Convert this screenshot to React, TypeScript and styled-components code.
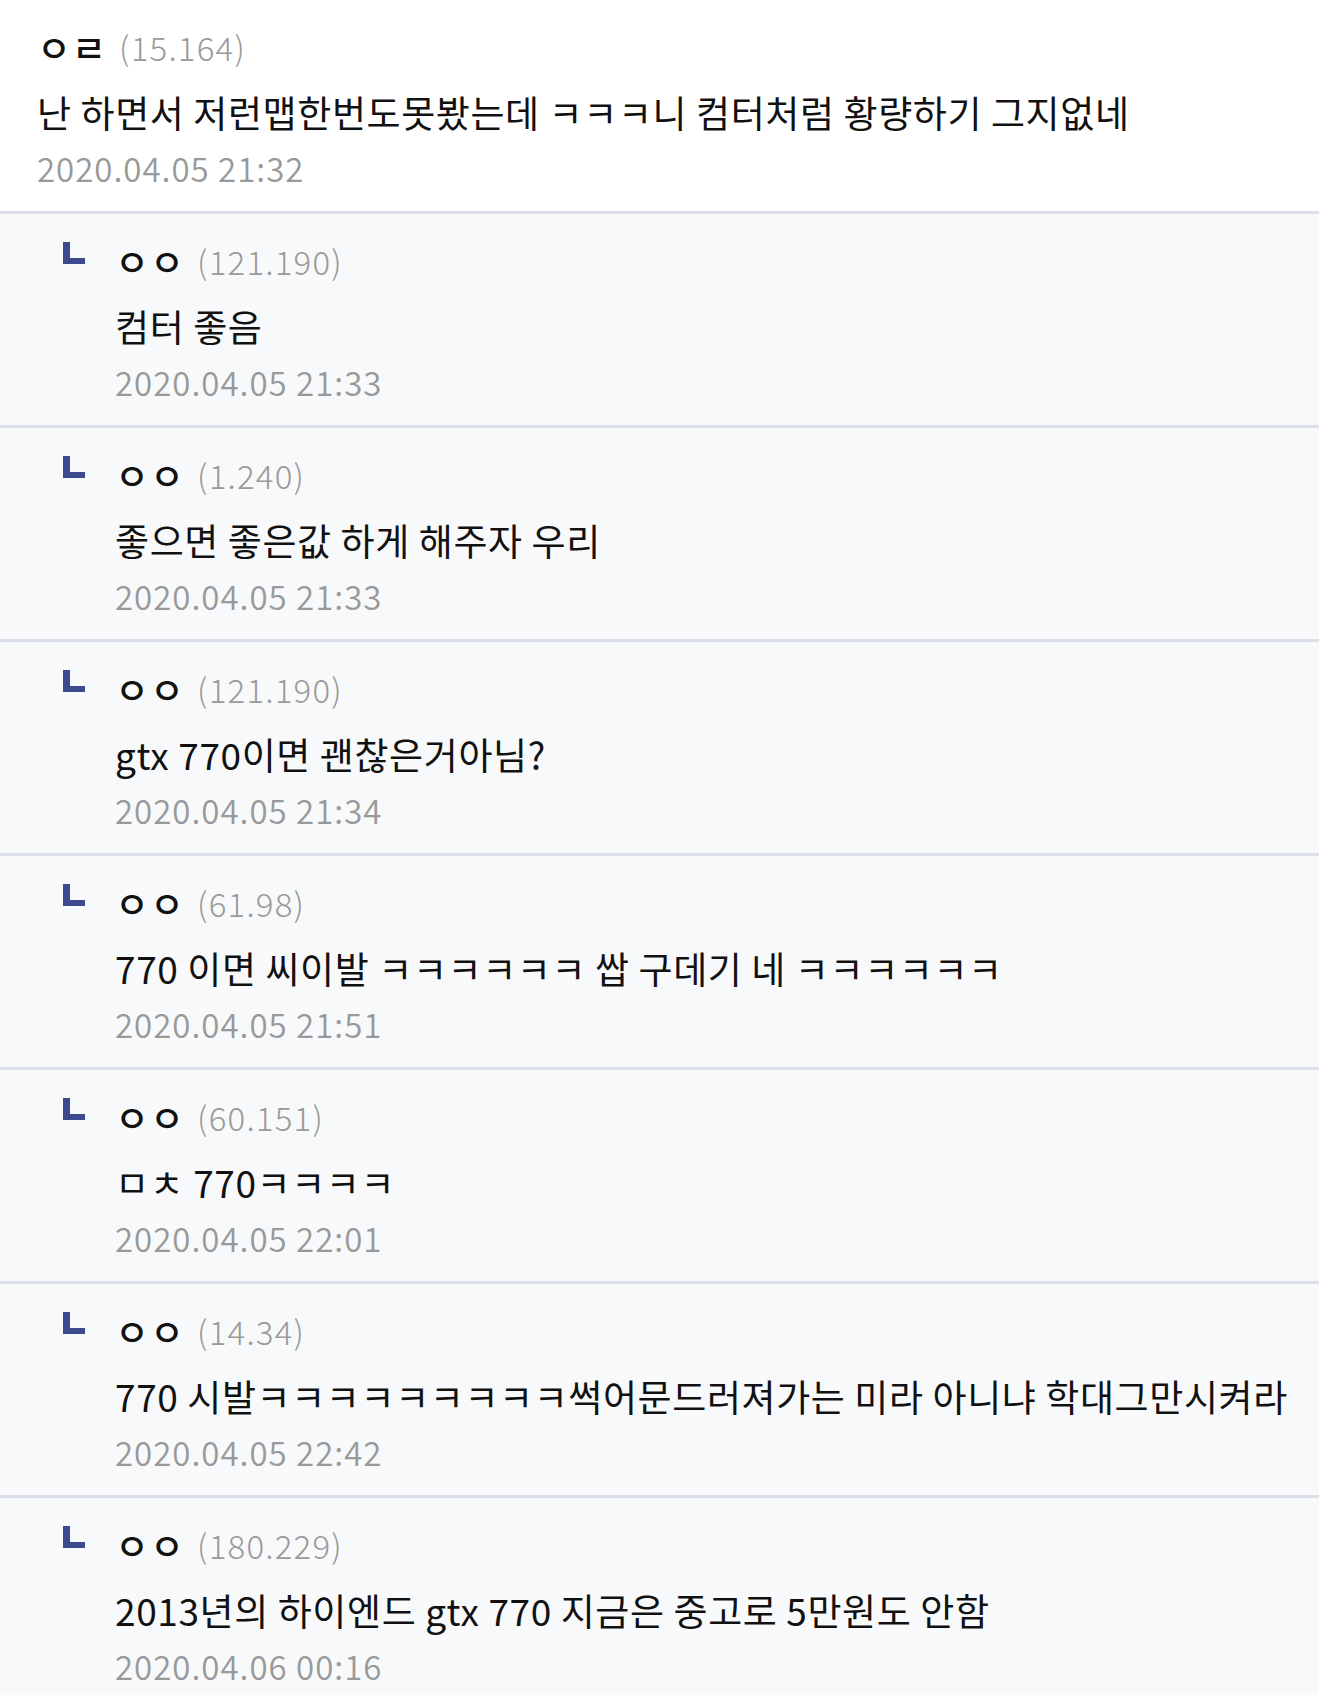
import React from 'react';
import styled, { createGlobalStyle } from 'styled-components';

const GlobalStyle = createGlobalStyle`
  html, body {
    margin: 0;
    padding: 0;
    background: #f8f9fb;
  }
  body {
    font-family: "Noto Sans CJK KR", "Noto Sans", sans-serif;
    color: #111;
  }
`;

interface Comment {
  nick: string;
  ip: string;
  text: string;
  date: string;
}

const main: Comment = {
  nick: 'ㅇㄹ',
  ip: '(15.164)',
  text: '난 하면서 저런맵한번도못봤는데 ㅋㅋㅋ니 컴터처럼 황량하기 그지없네',
  date: '2020.04.05 21:32',
};

const replies: Comment[] = [
  { nick: 'ㅇㅇ', ip: '(121.190)', text: '컴터 좋음', date: '2020.04.05 21:33' },
  { nick: 'ㅇㅇ', ip: '(1.240)', text: '좋으면 좋은값 하게 해주자 우리', date: '2020.04.05 21:33' },
  { nick: 'ㅇㅇ', ip: '(121.190)', text: 'gtx 770이면 괜찮은거아님?', date: '2020.04.05 21:34' },
  { nick: 'ㅇㅇ', ip: '(61.98)', text: '770 이면 씨이발 ㅋㅋㅋㅋㅋㅋ 쌉 구데기 네 ㅋㅋㅋㅋㅋㅋ', date: '2020.04.05 21:51' },
  { nick: 'ㅇㅇ', ip: '(60.151)', text: 'ㅁㅊ 770ㅋㅋㅋㅋ', date: '2020.04.05 22:01' },
  {
    nick: 'ㅇㅇ',
    ip: '(14.34)',
    text: '770 시발ㅋㅋㅋㅋㅋㅋㅋㅋㅋ썩어문드러져가는 미라 아니냐 학대그만시켜라',
    date: '2020.04.05 22:42',
  },
  { nick: 'ㅇㅇ', ip: '(180.229)', text: '2013년의 하이엔드 gtx 770 지금은 중고로 5만원도 안함', date: '2020.04.06 00:16' },
];

const List = styled.div`
  display: flex;
  flex-direction: column;
  width: 1319px;
  overflow: hidden;
`;

const Item = styled.div<{ $reply?: boolean }>`
  display: flex;
  align-items: flex-start;
  height: 214px;
  box-sizing: border-box;
  padding: 18px 0 0 ${(p) => (p.$reply ? '63px' : '37px')};
  background: ${(p) => (p.$reply ? '#f8f9fb' : '#fff')};
  border-bottom: 3px solid #dcdee9;
  white-space: nowrap;
`;

const ReplyMark = styled.div`
  width: 52px;
  flex: none;
  padding-top: 10px;
`;

const Body = styled.div`
  display: flex;
  flex-direction: column;
  min-width: 0;
`;

const Head = styled.div`
  display: flex;
  align-items: center;
  height: 58px;
`;

const Nick = styled.span`
  font-family: "Noto Sans CJK KR", sans-serif;
  font-size: 37px;
  font-weight: 500;
  color: #111;
  letter-spacing: 1px;
`;

const Ip = styled.span`
  margin-left: 12px;
  font-size: 33px;
  font-weight: 300;
  color: #9a9a9a;
  letter-spacing: 1.2px;
`;

const Text = styled.div`
  font-size: 37px;
  line-height: 72px;
  height: 70px;
  color: #111;
  letter-spacing: 0.6px;
`;

const Date = styled.div`
  font-size: 33px;
  font-weight: 350;
  line-height: 44px;
  color: #999;
  letter-spacing: 1px;
`;

const ReplyIcon = () => (
  <svg width="22" height="22" viewBox="0 0 22 22">
    <path d="M0 0H7V16H22V22H0Z" fill="#3d4a8e" />
  </svg>
);

const CommentItem: React.FC<{ c: Comment; reply?: boolean }> = ({ c, reply }) => (
  <Item $reply={reply}>
    {reply && (
      <ReplyMark>
        <ReplyIcon />
      </ReplyMark>
    )}
    <Body>
      <Head>
        <Nick>{c.nick}</Nick>
        <Ip>{c.ip}</Ip>
      </Head>
      <Text>{c.text}</Text>
      <Date>{c.date}</Date>
    </Body>
  </Item>
);

export default function App() {
  return (
    <>
      <GlobalStyle />
      <List>
        <CommentItem c={main} />
        {replies.map((r, i) => (
          <CommentItem key={i} c={r} reply />
        ))}
      </List>
    </>
  );
}
